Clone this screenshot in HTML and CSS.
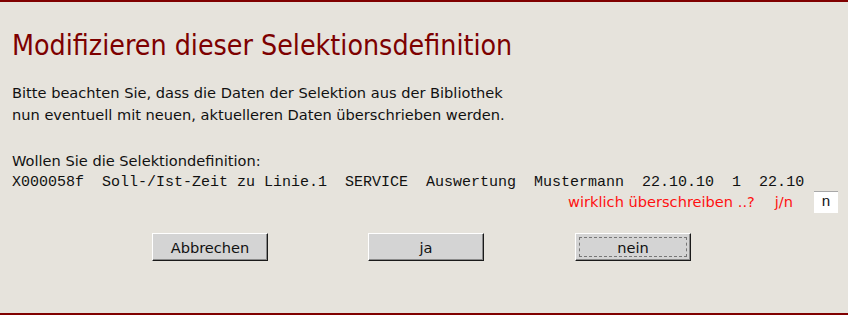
FILE: index.html
```html
<!DOCTYPE html>
<html lang="de">
<head>
<meta charset="utf-8">
<title>Modifizieren dieser Selektionsdefinition</title>
<link rel="stylesheet" href="styles.css">
</head>
<body>
<div class="page">
  <h1 class="title">Modifizieren dieser Selektionsdefinition</h1>
  <p class="text">Bitte beachten Sie, dass die Daten der Selektion aus der Bibliothek<br>nun eventuell mit neuen, aktuelleren Daten überschrieben werden.</p>
  <p class="text question">Wollen Sie die Selektiondefinition:</p>
  <pre class="record">X000058f  Soll-/Ist-Zeit zu Linie.1  SERVICE  Auswertung  Mustermann  22.10.10  1  22.10</pre>
  <div class="confirm">
    <span class="warn">wirklich überschreiben ..?</span>
    <span class="warn yn">j/n</span>
    <input class="answer" type="text" value="n" size="1">
  </div>
  <div class="actions">
    <button class="btn btn-cancel" type="button">Abbrechen</button>
    <button class="btn btn-yes" type="button">ja</button>
    <button class="btn btn-no focused" type="button">nein</button>
  </div>
</div>
</body>
</html>
```

FILE: styles.css
```css
html, body {
  margin: 0;
  padding: 0;
  background: #e6e3dc;
}

.page {
  box-sizing: border-box;
  height: 315px;
  border-top: 2px solid #800000;
  border-bottom: 2px solid #800000;
  padding: 0 10px 0 12px;
  font-family: "DejaVu Sans", sans-serif;
  font-size: 14.6px;
  color: #111;
}

.title {
  margin: 0;
  padding-top: 25px;
  font-family: "DejaVu Sans Condensed", "DejaVu Sans", sans-serif;
  font-size: 28.3px;
  line-height: 38px;
  font-weight: normal;
  color: #7d0000;
}

.text {
  margin: 0;
  line-height: 22px;
}

.title + .text {
  margin-top: 17px;
}

.question {
  margin-top: 24px;
}

.record {
  margin: 0;
  font-family: "Liberation Mono", "Courier New", monospace;
  font-size: 15px;
  line-height: 22px;
  color: #111;
}

.confirm {
  display: flex;
  justify-content: flex-end;
  align-items: center;
  height: 22px;
  margin-top: -3px;
}

.warn {
  color: #ff1010;
  line-height: 22px;
}

.yn {
  margin-left: 20px;
  margin-right: 21px;
}

.answer {
  box-sizing: border-box;
  width: 24px;
  height: 22px;
  margin: 0;
  padding: 0;
  border: none;
  border-top: 1px solid #a8a8a8;
  background: #fff;
  font-family: "Liberation Mono", "Courier New", monospace;
  font-size: 15px;
  text-align: center;
  color: #111;
}

.actions {
  display: flex;
  margin-top: 20px;
  padding-left: 140px;
}

.btn {
  box-sizing: border-box;
  width: 116px;
  height: 28px;
  margin: 0;
  padding: 0;
  background: #d4d4d4;
  border: 1px solid;
  border-color: #ffffff #1a1a1a #1a1a1a #ffffff;
  box-shadow: inset -1px -1px 0 #8a8a8a;
  font-family: "DejaVu Sans", sans-serif;
  font-size: 14.6px;
  color: #111;
}

.btn-yes {
  margin-left: 100px;
}

.btn-no {
  margin-left: 91px;
}

.focused {
  outline: 1px dashed #777;
  outline-offset: -5px;
}
```
